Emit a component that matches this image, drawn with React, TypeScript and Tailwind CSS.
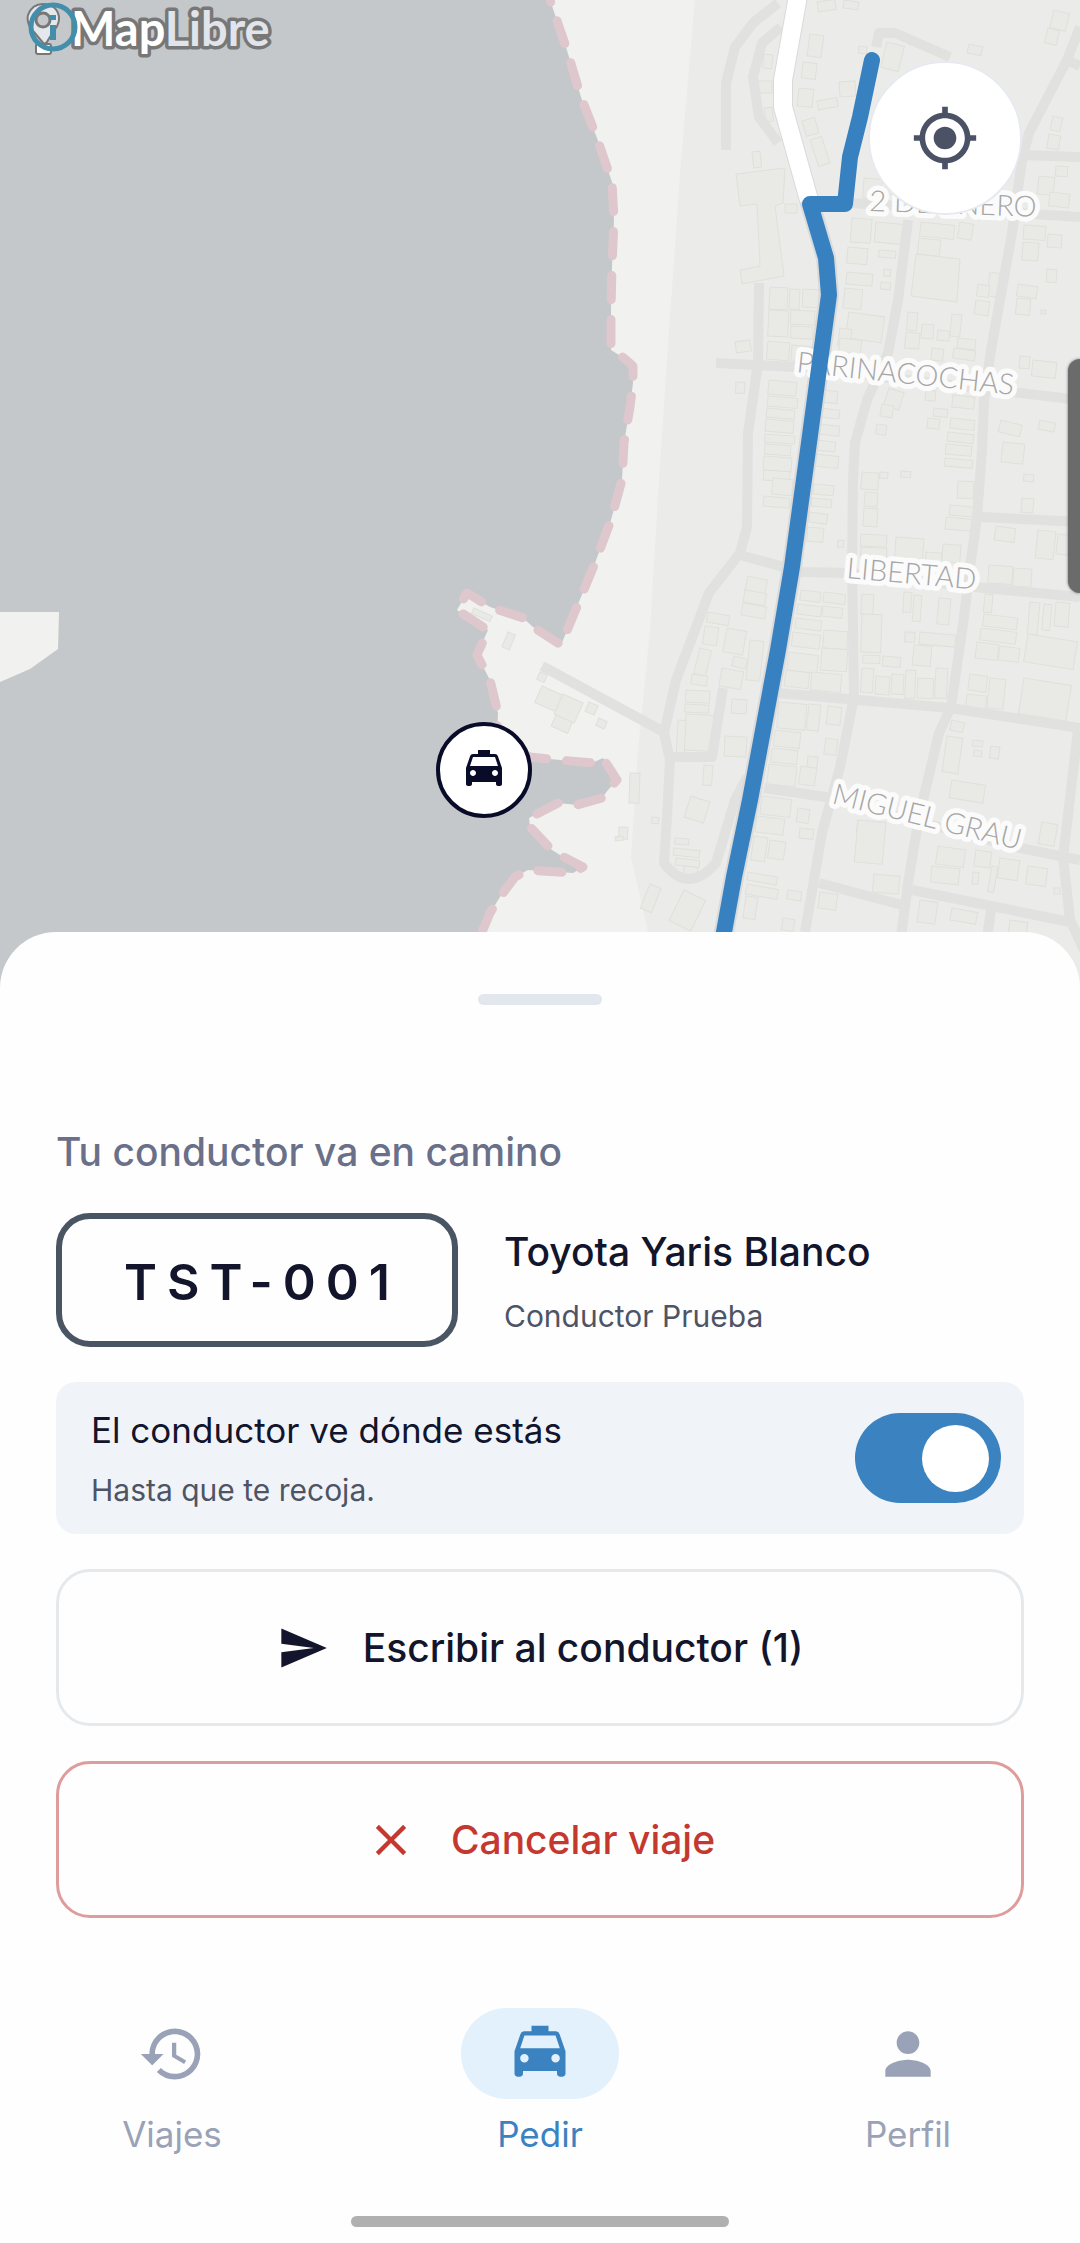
import { useState } from 'react'
import { MdClose, MdHistory, MdMyLocation, MdPerson, MdSend } from 'react-icons/md'

const COAST =
  'M550 0 L566 47 L581 97 L597 138 L612 182 L614 220 L612 267 L611 310 L611 350 L624 358 L633 366 L633 383 L630 407 L624 443 L622 480 L611 520 L595 563 L581 597 L561 645 L533 627 L523 618 L490 607 L467 593 L457 610 L488 630 L477 655 L490 680 L498 713 L497 740 L530 757 L560 760 L592 763 L603 758 L617 780 L608 790 L602 798 L577 805 L558 803 L529 818 L530 827 L552 850 L560 855 L583 867 L573 873 L528 870 L515 877 L500 897 L490 913 L482 932 L466 988'

const STREETS = [
  'M778 3 L753 23 L735 47 L726 83 L726 150',
  'M781 27 L762 43 L753 77 L759 117 L778 143',
  'M876 47 L879 33 L895 33 L950 57',
  'M1080 27 L1067 60 L1029 133 L1022 160 L1012 233 L991 350 L984 400 L982 450 L977 517 L970 567 L964 617 L951 707 L939 733 L919 817 L908 883 L898 960',
  'M1067 60 L1080 66',
  'M1022 155 L1080 157',
  'M850 203 L1080 217',
  'M908 220 L898 300 L888 353 L867 400 L855 443 L853 480 L852 567 L854 697 L840 767 L822 833 L805 932',
  'M716 363 L795 367 L1080 400',
  'M759 283 L758 363 L748 433 L747 527 L740 553 L709 593 L676 680 L664 733 L670 760 L667 817 L664 863 Q688 895 716 863 L735 800 L747 777',
  'M740 555 L802 572 L850 573 L984 588 L1080 597',
  'M982 517 L1080 522',
  'M778 693 L950 708 L1080 728',
  'M671 757 L712 757 L723 688',
  'M542 666 L664 732',
  'M764 788 L826 797 L1015 847 L1080 860',
  'M1078 730 L1063 857 L1070 920 L1084 950',
  'M819 883 L902 905',
  'M912 890 L1070 922',
  'M991 910 L984 960',
]

// x, y, width, height, tilt
const BUILDINGS: number[][] = [
  [817, 2, 18, 10, -8], [844, 0, 15, 8, 8], [810, 34, 14, 22, 8], [764, 54, 9, 14, 6], [859, 46, 8, 7, 6],
  [887, 42, 18, 26, 14], [969, 44, 14, 9, 12], [1054, 10, 16, 18, 14], [1048, 28, 12, 15, 14], [803, 62, 14, 16, 6],
  [756, 81, 16, 12, 0], [799, 88, 15, 18, 6], [839, 82, 16, 15, -4], [817, 101, 20, 9, -10], [764, 108, 8, 14, -6],
  [802, 121, 13, 16, -16], [810, 140, 12, 28, -18], [1053, 116, 10, 14, 12], [1049, 134, 12, 14, 10], [752, 152, 8, 16, -6],
  [785, 204, 12, 9, 0], [864, 178, 18, 20, 4], [886, 178, 14, 16, 4], [1039, 176, 16, 18, 6], [1056, 166, 12, 10, 4],
  [1050, 192, 20, 14, 6], [852, 218, 20, 24, 4], [876, 222, 28, 20, 5], [848, 247, 20, 16, 5], [879, 250, 17, 7, 4],
  [847, 272, 26, 12, 5], [845, 288, 18, 20, 6], [884, 269, 7, 7, 5], [881, 282, 10, 7, 5], [921, 222, 34, 14, 6],
  [919, 238, 22, 16, 6], [960, 222, 14, 16, 10], [1024, 225, 22, 14, 4], [1023, 242, 16, 18, 4], [1048, 234, 14, 13, 4],
  [1047, 269, 10, 13, 4], [1018, 284, 20, 12, 8], [1017, 298, 14, 16, 6], [1041, 310, 5, 4, 0], [990, 272, 10, 24, 8],
  [978, 284, 12, 12, 8], [976, 300, 14, 14, 8], [770, 287, 18, 22, 3], [790, 289, 10, 20, 3], [803, 289, 16, 18, 3],
  [769, 310, 20, 26, 3], [791, 310, 24, 14, 3], [791, 326, 22, 12, 3], [849, 312, 36, 26, 8], [840, 328, 12, 18, 8],
  [908, 312, 10, 18, 5], [906, 332, 14, 16, 5], [922, 324, 12, 14, 5], [952, 314, 10, 22, 6], [958, 338, 18, 10, 6],
  [938, 330, 12, 10, 6], [735, 342, 15, 11, -8], [768, 341, 22, 18, 5], [792, 345, 20, 16, 5], [840, 338, 22, 14, 6],
  [932, 348, 12, 12, 6], [954, 348, 22, 10, 8], [1033, 360, 24, 16, 6], [1020, 356, 10, 12, 5], [736, 382, 9, 11, 3],
  [769, 380, 28, 14, 5], [768, 396, 30, 10, 5], [767, 408, 28, 9, 5], [766, 419, 28, 12, 5], [765, 434, 30, 8, 4],
  [765, 444, 26, 10, 4], [764, 456, 28, 14, 4], [764, 470, 26, 10, 4], [889, 388, 16, 18, 18], [882, 404, 12, 12, 10],
  [877, 424, 10, 10, 8], [926, 390, 10, 10, 6], [934, 408, 14, 8, 6], [928, 418, 12, 10, 6], [953, 395, 22, 12, 6],
  [951, 418, 24, 10, 6], [948, 432, 26, 9, 6], [946, 444, 26, 10, 5], [945, 458, 28, 8, 5], [1001, 420, 22, 12, 14],
  [1003, 442, 22, 20, 6], [1040, 420, 16, 9, 12], [822, 390, 16, 12, 6], [820, 408, 20, 9, 6], [818, 424, 22, 10, 6],
  [816, 440, 20, 10, 6], [815, 454, 24, 12, 6], [773, 478, 20, 16, 5], [764, 496, 26, 10, 5],
  [814, 484, 20, 10, 5], [812, 498, 20, 8, 5], [810, 512, 18, 10, 8], [808, 527, 16, 14, 5], [838, 540, 6, 7, 5],
  [862, 472, 17, 17, 4], [880, 472, 8, 6, 4], [901, 471, 10, 6, 4], [865, 492, 13, 14, 4], [864, 508, 14, 18, 4],
  [861, 534, 26, 12, 3], [861, 547, 26, 12, 3], [896, 537, 28, 24, 4], [926, 552, 16, 12, 4], [943, 544, 18, 18, 4],
  [958, 481, 16, 17, 3], [950, 505, 24, 10, 5], [946, 517, 26, 12, 5], [1024, 474, 10, 7, 5], [1022, 498, 12, 14, 5],
  [996, 526, 20, 14, 8], [1038, 530, 18, 28, 6], [1058, 534, 12, 20, 6], [989, 565, 24, 18, 4], [1014, 568, 18, 18, 4],
  [748, 576, 20, 14, 12], [745, 590, 22, 12, 10], [743, 603, 24, 12, 10], [801, 590, 20, 10, 7], [798, 604, 24, 10, 7],
  [824, 592, 22, 10, 7], [796, 618, 26, 10, 7], [823, 606, 20, 10, 7], [793, 632, 28, 14, 7], [824, 630, 24, 18, 4],
  [789, 652, 30, 18, 7], [822, 648, 26, 22, 4], [786, 670, 24, 16, 7], [812, 672, 30, 18, 5], [862, 594, 12, 20, 4],
  [862, 614, 20, 38, 2], [863, 655, 17, 8, 2], [883, 656, 18, 10, 5], [905, 632, 10, 10, 2], [914, 645, 18, 20, 5],
  [920, 632, 36, 12, 5], [904, 592, 8, 20, 4], [914, 595, 8, 26, 4], [939, 598, 12, 26, 5], [862, 668, 12, 24, 4],
  [876, 676, 14, 18, 4], [892, 674, 12, 20, 3], [906, 670, 10, 28, 3], [918, 678, 16, 20, 3], [936, 668, 12, 30, 3],
  [985, 594, 8, 18, 5], [984, 614, 34, 12, 7], [981, 628, 36, 12, 7], [977, 642, 22, 16, 7], [1000, 646, 20, 14, 7],
  [1030, 602, 10, 32, 5], [1044, 604, 8, 26, 5], [1056, 602, 14, 24, 5], [1028, 634, 50, 28, 9], [970, 674, 18, 16, 8],
  [967, 694, 20, 14, 6], [990, 678, 16, 30, 6], [1024, 678, 48, 36, 9], [708, 612, 22, 10, 10], [705, 626, 14, 18, 8],
  [727, 628, 20, 24, 10], [700, 648, 12, 26, 14], [734, 656, 14, 10, 14], [722, 668, 22, 18, 10], [692, 674, 16, 10, 8],
  [750, 640, 14, 40, 6], [686, 690, 24, 12, 3], [685, 704, 24, 8, 3], [686, 714, 28, 36, 3], [678, 720, 8, 38, 3],
  [732, 699, 15, 14, 4], [725, 736, 22, 20, 3], [779, 702, 28, 26, 5], [775, 730, 26, 16, 6], [772, 748, 26, 14, 6],
  [769, 764, 28, 20, 6], [809, 704, 12, 26, 6], [828, 706, 14, 18, 6], [826, 738, 12, 16, 8], [808, 756, 10, 12, 6],
  [801, 766, 16, 18, 8], [704, 765, 9, 20, 4], [691, 796, 20, 22, 18], [762, 796, 30, 18, 7], [757, 816, 28, 16, 7],
  [798, 808, 12, 14, 8], [800, 828, 14, 10, 6], [754, 836, 14, 24, 8], [770, 840, 16, 18, 8], [675, 838, 14, 6, 4],
  [674, 848, 26, 7, 6], [676, 858, 24, 7, 6], [684, 866, 14, 10, 6], [748, 872, 30, 8, 10], [747, 884, 32, 10, 10],
  [746, 896, 12, 22, 8], [788, 890, 14, 9, 8], [783, 918, 12, 12, 8], [952, 720, 13, 10, 14], [973, 740, 10, 6, 6],
  [974, 750, 8, 6, 6], [991, 746, 9, 12, 8], [947, 736, 16, 36, 8], [952, 780, 34, 18, 9], [858, 820, 24, 12, 8],
  [858, 820, 28, 42, 5], [874, 874, 26, 18, 5], [938, 846, 28, 18, 8], [932, 866, 28, 16, 6], [976, 850, 16, 16, 8],
  [1000, 858, 20, 20, 8], [1042, 822, 16, 22, 10], [1028, 866, 20, 18, 8], [973, 872, 6, 12, 5], [992, 866, 6, 26, 10],
  [820, 892, 18, 16, 8], [952, 908, 26, 12, 10], [920, 900, 18, 22, 8], [1010, 920, 18, 14, 8], [1054, 888, 6, 6, 0],
  [684, 890, 24, 34, 26], [650, 884, 12, 26, 22], [630, 773, 10, 30, 2], [619, 827, 9, 12, 2], [615, 837, 8, 4, -6],
  [652, 817, 7, 6, 6], [542, 686, 24, 18, 24], [563, 694, 22, 22, 24], [556, 715, 18, 12, 24], [599, 718, 9, 8, 24],
  [589, 702, 10, 10, 24], [540, 672, 8, 8, 24], [508, 632, 8, 16, 22], [474, 608, 20, 6, 24], [612, 938, 10, 6, -20],
]

function TaxiIcon({ className }: { className?: string }) {
  return (
    <svg viewBox="0 1 24 24" fill="currentColor" className={className} aria-hidden="true">
      <path d="M18.92 6.01C18.72 5.42 18.16 5 17.5 5H15V3H9v2H6.5c-.66 0-1.21.42-1.42 1.01L3 12v8c0 .55.45 1 1 1h1c.55 0 1-.45 1-1v-1h12v1c0 .55.45 1 1 1h1c.55 0 1-.45 1-1v-8l-2.08-5.99zM6.5 16c-.83 0-1.5-.67-1.5-1.5S5.67 13 6.5 13s1.5.67 1.5 1.5S7.33 16 6.5 16zm11 0c-.83 0-1.5-.67-1.5-1.5s.67-1.5 1.5-1.5 1.5.67 1.5 1.5-.67 1.5-1.5 1.5zM5 11l1.5-4.5h11L19 11H5z" />
    </svg>
  )
}

const navItems = [
  { label: 'Viajes', icon: MdHistory, href: '#viajes' },
  { label: 'Pedir', icon: TaxiIcon, href: '#pedir' },
  { label: 'Perfil', icon: MdPerson, href: '#perfil' },
]

function StreetLabel({ x, y, angle, children }: { x: number; y: number; angle: number; children: string }) {
  return (
    <text
      x={x}
      y={y}
      transform={`rotate(${angle} ${x} ${y})`}
      fontSize={29}
      fontWeight={300}
      fill="#a6a6a6"
      stroke="#fbfbfb"
      strokeWidth={10}
      strokeLinejoin="round"
      paintOrder="stroke"
      className="font-['Lato',sans-serif]"
    >
      {children}
    </text>
  )
}

function MapLibreLogo() {
  return (
    <g>
      {/* Pin */}
      <g stroke="#777777" strokeWidth={2} fill="#e4e7ec">
        <path d="M44 44 L34 32 C27 25 27 18 28 15 C31 7 37 4 43 4 C52 4 58 9 59 17 C60 26 52 32 47 42 Z" />
        <circle cx={43} cy={20} r={7} fill="#c4c8cb" strokeWidth={3} />
        <rect x={36} y={44} width={15} height={10} rx={2} fill="#ffffff" />
      </g>
      <text
        x={71}
        y={46}
        fontSize={47}
        fontWeight={700}
        stroke="#777777"
        strokeWidth={7}
        strokeLinejoin="round"
        paintOrder="stroke"
        className="font-['Lato',sans-serif]"
      >
        <tspan fill="#ffffff">Map</tspan>
        <tspan fill="#e1e4ea">Libre</tspan>
      </text>
      {/* Attribution info */}
      <circle cx={53} cy={27} r={22} fill="none" stroke="#438fab" strokeWidth={5} />
      <path d="M50 15 h6 v5 h-6 z M50 25 h6 v15 h-6 z" fill="#438fab" />
    </g>
  )
}

function TripMap() {
  return (
    <svg viewBox="0 0 1080 988" preserveAspectRatio="xMidYMin slice" className="block h-full w-full" aria-label="Mapa del viaje">
      <rect width={1080} height={988} fill="#f1f2f0" />
      <path d="M695 0 L681 160 L667 360 L659 480 L650 630 L638 750 L631 857 L648 932 L652 988 H1080 V0 Z" fill="#ebebe9" />
      <path d={`${COAST} L0 988 L0 0 Z`} fill="#c4c8ca" />
      <path d="M0 612 H59 L58 649 L30 669 L0 682 Z" fill="#f1f2f0" />
      <path d={COAST} fill="none" stroke="#dfc8cd" strokeWidth={9} strokeLinecap="round" strokeLinejoin="round" strokeDasharray="24 20" strokeDashoffset={22} />

      <g fill="#e9eae5" stroke="#dfe0da" strokeWidth={1}>
        <path d="M736 174 L785 168 L783 203 L775 206 L784 276 L742 284 L740 270 L760 266 L757 204 L740 206 Z" />
        <path d="M916 254 L960 259 L957 302 L911 296 Z" />
        {BUILDINGS.map(([x, y, w, h, a], i) => (
          <rect key={i} x={x} y={y} width={w} height={h} transform={`rotate(${a} ${x} ${y})`} />
        ))}
      </g>

      <g fill="none" stroke="#e1e1e0" strokeWidth={10} strokeLinejoin="round">
        {STREETS.map((d) => (
          <path key={d} d={d} />
        ))}
      </g>

      {/* Avenue */}
      <g fill="none" strokeLinejoin="round">
        <path d="M798 -4 L783 80 L783 107 L809 200 L826 258 L829 295 L808 450 L792 567 L778 650 L750 800 L734 877 L724 932 L720 960" stroke="#d8dadb" strokeWidth={20} />
        <path d="M798 -4 L783 80 L783 107 L809 200" stroke="#ffffff" strokeWidth={18} />
      </g>

      <StreetLabel x={869} y={211} angle={2}>2 DE ENERO</StreetLabel>
      <StreetLabel x={796} y={372} angle={6}>PARINACOCHAS</StreetLabel>
      <StreetLabel x={846} y={578} angle={5}>LIBERTAD</StreetLabel>
      <StreetLabel x={831} y={803} angle={14}>MIGUEL GRAU</StreetLabel>

      {/* Route */}
      <path
        d="M872 60 L860 117 L850 157 L845 204 L810 204 L826 258 L829 295 L808 450 L792 567 L778 650 L750 800 L734 877 L724 932 L720 960"
        fill="none"
        stroke="#3781c1"
        strokeWidth={16}
        strokeLinecap="round"
        strokeLinejoin="round"
      />
      <MapLibreLogo />
    </svg>
  )
}

export default function App() {
  const [shareLocation, setShareLocation] = useState(true)
  const [active, setActive] = useState('Pedir')

  return (
    <div className="flex min-h-screen flex-col overflow-hidden bg-[#fefefe] font-['Inter',sans-serif] text-[#12152b]">
      {/* Map */}
      <section className="relative h-[988px]">
        <TripMap />
        <div className="absolute top-[722px] left-[436px] flex size-24 items-center justify-center rounded-full border-4 border-[#080c29] bg-white text-[#080c29]">
          <TaxiIcon className="size-12" />
        </div>
        <button
          type="button"
          aria-label="Mi ubicación"
          className="absolute top-[61px] right-[58px] flex size-[154px] items-center justify-center rounded-full border-2 border-[#e6eaf0] bg-white text-[#4b5265]"
        >
          <MdMyLocation className="size-17" />
        </button>
        <div className="absolute top-[359px] right-0 h-[234px] w-3 rounded-l-xl bg-[#6b6b6b] shadow-[0_0_3px_#6b6b6b]" />
      </section>

      {/* Bottom sheet */}
      <main className="relative -mt-14 flex flex-col rounded-t-[56px] bg-[#fefefe] px-14 pt-[62px]">
        <div className="h-[11px] w-31 self-center rounded-full bg-[#e2e6ed]" />
        <h1 className="mt-[121px] text-[39px] leading-[52px] font-medium text-[#6a7089]">Tu conductor va en camino</h1>

        <div className="mt-[35px] flex flex-col gap-[35px]">
          <div className="flex items-center gap-[46px]">
            <div className="flex h-[134px] items-center rounded-[34px] border-6 border-[#4a5564] pt-1 pr-[52px] pl-[62px] text-[50px] leading-none font-semibold tracking-[10px]">
              TST-001
            </div>
            <div className="flex flex-col gap-4 pt-1">
              <p className="text-[39px] leading-[52px] font-medium">Toyota Yaris Blanco</p>
              <p className="text-[30px] leading-[44px] text-[#4e5465]">Conductor Prueba</p>
            </div>
          </div>

          <div className="flex h-[152px] items-center justify-between rounded-[20px] bg-[#f0f4f9] pr-[23px] pl-[35px]">
            <label htmlFor="share-location" className="flex flex-col gap-4 pt-1">
              <span className="text-[35px] leading-[44px]">El conductor ve dónde estás</span>
              <span className="text-[30px] leading-[44px] text-[#4e5465]">Hasta que te recoja.</span>
            </label>
            <input
              id="share-location"
              type="checkbox"
              role="switch"
              checked={shareLocation}
              onChange={(e) => setShareLocation(e.target.checked)}
              className="flex h-[90px] w-[146px] appearance-none items-center rounded-full bg-[#a3acba] px-3 before:size-[67px] before:rounded-full before:bg-white checked:justify-end checked:bg-[#3a82c0]"
            />
          </div>

          <button type="button" className="flex h-[157px] items-center justify-center gap-[34px] rounded-[34px] border-3 border-[#e6e9ec] text-[39px] leading-[52px] font-medium">
            <MdSend className="size-13" />
            Escribir al conductor (1)
          </button>
          <button type="button" className="flex h-[157px] items-center justify-center gap-[34px] rounded-[34px] border-3 border-[#df9c9c] text-[39px] leading-[52px] font-medium text-[#c5382f]">
            <MdClose className="size-13" />
            Cancelar viaje
          </button>
        </div>
      </main>

      {/* Tabs */}
      <nav className="mt-[90px] flex justify-between px-[93px]">
        {navItems.map(({ label, icon: Icon, href }) => (
          <a
            key={label}
            href={href}
            onClick={() => setActive(label)}
            aria-current={active === label ? 'page' : undefined}
            className={`flex flex-col items-center gap-[13px] ${active === label ? 'text-[#3a82c0]' : 'text-[#99a2b6]'}`}
          >
            <span className={`flex h-[91px] w-[158px] items-center justify-center rounded-full ${active === label ? 'bg-[#e3f1fc]' : ''}`}>
              <Icon className="size-17" />
            </span>
            <span className="text-[35px] leading-[44px]">{label}</span>
          </a>
        ))}
      </nav>
      <div className="mx-auto mt-[60px] mb-4 h-[11px] w-[378px] rounded-full bg-[#b0b0b0]" />
    </div>
  )
}
